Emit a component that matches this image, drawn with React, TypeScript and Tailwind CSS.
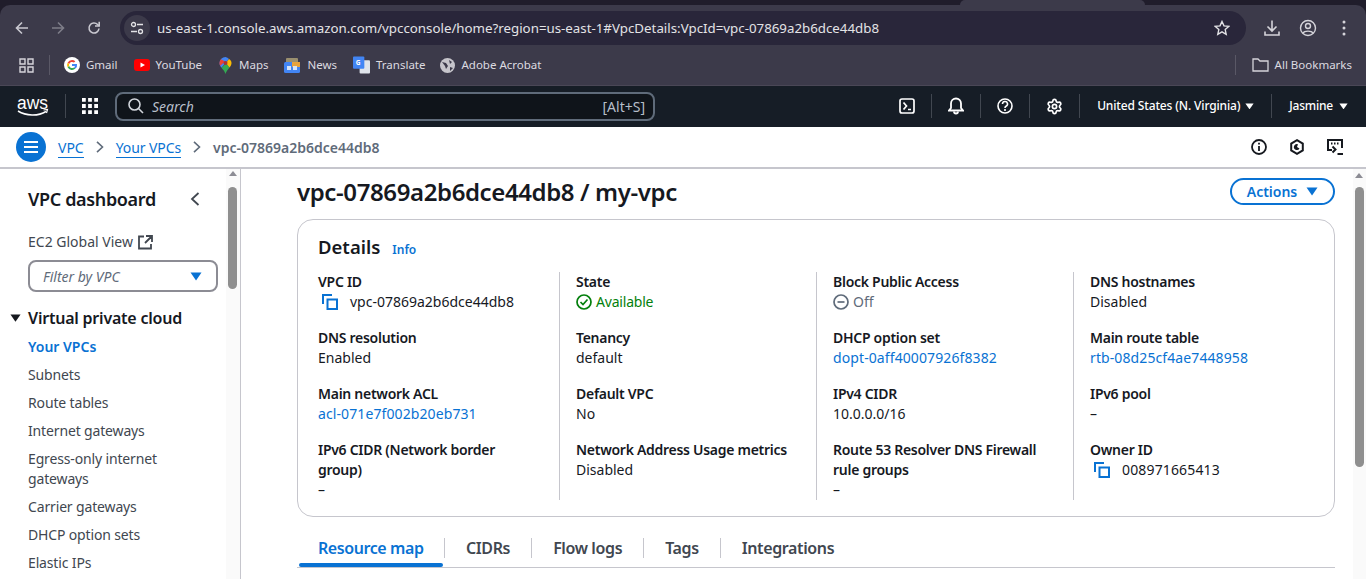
import React from "react";
import { Settings } from "lucide-react";

const F = "font-['Noto_Sans',sans-serif]";

function Back() {
  return (
    <svg width="16" height="16" viewBox="0 0 16 16" fill="none" stroke="currentColor" strokeWidth="1.6">
      <path d="M14 8H2.5M8 2.5 2.5 8 8 13.5" />
    </svg>
  );
}
function Forward() {
  return (
    <svg width="16" height="16" viewBox="0 0 16 16" fill="none" stroke="currentColor" strokeWidth="1.6">
      <path d="M2 8h11.5M8 2.5 13.5 8 8 13.5" />
    </svg>
  );
}
function Reload() {
  return (
    <svg width="16" height="16" viewBox="0 0 16 16" fill="none" stroke="currentColor" strokeWidth="1.6">
      <path d="M13 8.5a5 5 0 1 1-1.4-4L13 6" />
      <path d="M13.2 1.8V6H9" />
    </svg>
  );
}
function Copy() {
  return (
    <svg width="16" height="16" viewBox="0 0 16 16" fill="none" stroke="#0972d3" strokeWidth="2">
      <path d="M5.5 5.5h9.5v9.5H5.5z" />
      <path d="M1 10V1h9" />
    </svg>
  );
}
function Caret({ c = "#0972d3", w = 13 }: { c?: string; w?: number }) {
  return (
    <svg width={w} height={w * 0.75} viewBox="0 0 12 9">
      <path d="M0.5 0.5h11L6 8.5z" fill={c} />
    </svg>
  );
}
function Field({ label, children }: { label: React.ReactNode; children: React.ReactNode }) {
  return (
    <div className="flex flex-col">
      <div className="text-[14px] leading-[20px] font-semibold tracking-[-0.28px] text-[#16191f]">{label}</div>
      <div className="text-[14px] leading-[20px] text-[#16191f]">{children}</div>
    </div>
  );
}
function Lnk({ children }: { children: React.ReactNode }) {
  return <span className="tracking-[0.1px] text-[#0972d3]">{children}</span>;
}
function Bookmark({ icon, label, gap = "gap-[6px]" }: { icon: React.ReactNode; label: string; gap?: string }) {
  return (
    <div className={`flex items-center ${gap}`}>
      {icon}
      <span className="text-[11.5px] text-[#dcdbe0]">{label}</span>
    </div>
  );
}
function NavSep({ cls }: { cls: string }) {
  return <div className={`h-[24px] w-px bg-[#414750] ${cls}`} />;
}

const navItems = ["Subnets", "Route tables", "Internet gateways", "Egress-only internet gateways", "Carrier gateways", "DHCP option sets", "Elastic IPs"];

export default function App() {
  return (
    <div className={`${F} flex h-[579px] w-[1366px] flex-col overflow-hidden bg-white`}>
      <div className="shrink-0 bg-[#201d2b]">
        {/* tab strip remnant */}
        <div className="relative h-[5px]">
          <div className="absolute left-[960px] top-0 h-[5px] w-[185px] rounded-t-lg bg-[#3c3a4a]" />
        </div>
        {/* browser toolbar */}
        <div className="flex h-[46px] items-center rounded-t-[10px] bg-[#3c3a4a]">
          <div className="flex w-[120px] items-center pl-[14px] text-[#c9c8d0]">
            <Back />
            <span className="ml-[20px] text-[#7e7d88]"><Forward /></span>
            <span className="ml-[20px]"><Reload /></span>
          </div>
          <div className="flex h-[34px] w-[1126px] items-center rounded-full bg-[#29263a] pl-[4px] pr-[16px]">
            <div className="flex h-[26px] w-[26px] items-center justify-center rounded-full bg-[#3c3a4a]">
              <svg width="14" height="14" viewBox="0 0 14 14" fill="none" stroke="#e3e3e6" strokeWidth="1.3">
                <circle cx="3.5" cy="3.5" r="2" />
                <path d="M7 3.5h6M1 10.5h6" />
                <circle cx="10.5" cy="10.5" r="2" />
              </svg>
            </div>
            <span className="ml-[7px] flex-1 pt-[1px] text-[13.3px] text-[#e3e3e6]">us-east-1.console.aws.amazon.com/vpcconsole/home?region=us-east-1#VpcDetails:VpcId=vpc-07869a2b6dce44db8</span>
            <svg width="16" height="16" viewBox="0 0 16 16" fill="none" stroke="#e3e3e6" strokeWidth="1.4">
              <path d="M8 1.500l2 4.400 4.700.5-3.500 3.200 1 4.700L8 11.900l-4.200 2.400 1-4.700L1.300 6.400 6 5.900z" />
            </svg>
          </div>
          <div className="ml-[17px] flex items-center text-[#d5d4da]">
            <svg width="18" height="18" viewBox="0 0 18 18" fill="none" stroke="currentColor" strokeWidth="1.6">
              <path d="M9 1.500v10.500M4.500 7.500 9 12l4.500-4.500M2 12.500V16h14v-3.500" />
            </svg>
            <svg className="ml-[18px]" width="18" height="18" viewBox="0 0 18 18" fill="none" stroke="currentColor" strokeWidth="1.4">
              <circle cx="9" cy="9" r="7.5" />
              <circle cx="9" cy="7" r="2.5" />
              <path d="M4 14c1.500-2.500 8.500-2.500 10 0" />
            </svg>
            <svg className="ml-[25px]" width="4" height="16" viewBox="0 0 4 16" fill="currentColor">
              <circle cx="2" cy="2" r="1.5" />
              <circle cx="2" cy="8" r="1.5" />
              <circle cx="2" cy="14" r="1.5" />
            </svg>
          </div>
        </div>
      </div>
      {/* bookmarks */}
      <div className="flex h-[34px] shrink-0 items-center bg-[#3c3a4a] pb-[6px] pl-[19px] pr-[14px]">
        <svg width="15" height="15" viewBox="0 0 15 15" fill="none" stroke="#d5d4da" strokeWidth="1.4">
          <path d="M1 1h5v5H1zM9 1h5v5H9zM1 9h5v5H1zM9 9h5v5H9z" />
        </svg>
        <div className="ml-[15px] mr-[14px] h-[20px] w-px bg-[#5a5866]" />
        <div className="flex items-center gap-[16px]">
          <Bookmark
            label="Gmail"
            icon={
              <svg width="16" height="16" viewBox="0 0 16 16">
                <circle cx="8" cy="8" r="8" fill="#fff" />
                <path d="M8 3a5 5 0 0 1 3.300 1.200L10 5.600A3 3 0 0 0 5.200 7L3.600 5.700A5 5 0 0 1 8 3z" fill="#ea4335" />
                <path d="M3.600 5.700 5.200 7a3 3 0 0 0 0 2L3.600 10.300a5 5 0 0 1 0-4.600z" fill="#fbbc05" />
                <path d="M3.600 10.300 5.200 9A3 3 0 0 0 10 10.400l1.500 1.200A5 5 0 0 1 3.600 10.300z" fill="#34a853" />
                <path d="M8 7h5a5 5 0 0 1-1.500 4.600L10 10.400A2 2 0 0 0 11 9H8z" fill="#4285f4" />
              </svg>
            }
          />
          <Bookmark
            label="YouTube"
            icon={
              <svg width="16" height="12" viewBox="0 0 16 12">
                <rect width="16" height="12" rx="3" fill="#f00" />
                <path d="M6.500 3.500v5L11 6z" fill="#fff" />
              </svg>
            }
          />
          <Bookmark
            label="Maps"
            gap="ml-[1px] gap-[7px]"
            icon={
              <svg width="13" height="17" viewBox="0 0 13 17">
                <path d="M6.500 0A6 6 0 0 0 .5 6c0 2 1 3.500 2 4.800L10 2A6 6 0 0 0 6.500 0z" fill="#4285f4" />
                <path d="M2.500 10.800C4 12.600 5.800 14.500 6.500 17c.7-2.500 2.500-4.500 4-6.500L7 6z" fill="#34a853" />
                <path d="M10 2 7 6l3.500 4.500c1-1.200 2-2.600 2-4.500 0-1.600-1-3-2.500-4z" fill="#fbbc05" />
                <path d="M2 2.200A6 6 0 0 0 .5 6c0 1 .3 2 .8 2.800L6 4.500z" fill="#ea4335" />
                <circle cx="6.500" cy="6" r="2" fill="#a33" />
              </svg>
            }
          />
          <Bookmark
            label="News"
            gap="gap-[7px]"
            icon={
              <svg width="16" height="15" viewBox="0 0 16 15">
                <rect x="2" y="0" width="12" height="8" rx="1" fill="#9a8f6f" />
                <rect x="0" y="4" width="16" height="11" rx="1.500" fill="#4285f4" />
                <rect x="8" y="4" width="8" height="5" fill="#e8a33d" />
                <rect x="3" y="8" width="4" height="4" fill="#d5e3f7" />
                <rect x="9" y="8" width="4" height="4" fill="#d5e3f7" />
              </svg>
            }
          />
          <Bookmark
            label="Translate"
            icon={
              <svg width="17" height="18" viewBox="0 0 18 18">
                <rect x="7" y="4" width="11" height="14" rx="1" fill="#dfe3ea" />
                <rect x="0" y="0" width="12" height="13" rx="1" fill="#4285f4" />
                <text x="3" y="9" fontSize="7" fill="#fff" fontWeight="700">G</text>
              </svg>
            }
          />
          <Bookmark
            label="Adobe Acrobat"
            gap="-ml-[1px] gap-[6px]"
            icon={
              <svg width="15" height="15" viewBox="0 0 15 15">
                <circle cx="7.500" cy="7.500" r="7.500" fill="#c6c5cb" />
                <path d="M2 4l4 1 2 3-2 3-1-3zM9 2l3 2-2 2zM10 9l3 1-3 3z" fill="#3c3a4a" />
              </svg>
            }
          />
        </div>
        <div className="flex-1" />
        <div className="mr-[16px] h-[20px] w-px bg-[#5a5866]" />
        <Bookmark
          label="All Bookmarks"
          icon={
            <svg width="17" height="14" viewBox="0 0 17 14" fill="none" stroke="#d5d4da" strokeWidth="1.3">
              <path d="M1 1h5l2 2h8v10H1z" />
            </svg>
          }
        />
      </div>
      {/* aws nav */}
      <div className="flex h-[42px] shrink-0 items-center border-t border-[#4a4756] bg-[#161d26] pb-[1px] pl-[17px] text-white">
        <svg className="overflow-visible" width="32" height="24" viewBox="0 0 32 24">
          <text x="0" y="15" fontSize="18" fill="#fff" fontFamily="Liberation Sans" textLength="31" lengthAdjust="spacingAndGlyphs">aws</text>
          <path d="M1 17c8 5 20 5.500 28 .5" fill="none" stroke="#fff" strokeWidth="1.5" />
          <path d="M26.500 16l4-.5-1 3.500" fill="none" stroke="#fff" strokeWidth="1.2" />
        </svg>
        <NavSep cls="ml-[16px]" />
        <svg className="ml-[16px]" width="16" height="16" viewBox="0 0 17 17" fill="#fff">
          <path d="M0 0h4v4H0zM6.500 0h4v4h-4zM13 0h4v4h-4zM0 6.500h4v4H0zM6.500 6.500h4v4h-4zM13 6.500h4v4h-4zM0 13h4v4H0zM6.500 13h4v4h-4zM13 13h4v4h-4z" />
        </svg>
        <div className="ml-[17px] flex h-[29px] w-[540px] items-center rounded-[8px] border-2 border-[#5f6b7a] bg-[#0f141a] pl-[11px] pr-[8px]">
          <svg width="16" height="16" viewBox="0 0 16 16" fill="none" stroke="#d1d5db" strokeWidth="1.6">
            <circle cx="6.500" cy="6.500" r="5.500" />
            <path d="M10.500 10.500 15 15" />
          </svg>
          <span className="ml-[8px] flex-1 text-[14px] italic text-[#b6bec9]">Search</span>
          <span className="text-[14px] text-[#b6bec9]">[Alt+S]</span>
        </div>
        <div className="flex-1" />
        <svg width="16" height="16" viewBox="0 0 16 16" fill="none" stroke="#fff" strokeWidth="1.7">
          <rect x="1" y="1" width="14" height="14" rx="2" />
          <path d="M4.500 4.500 7.500 8l-3 3.500M9 11.500h3" />
        </svg>
        <NavSep cls="mx-[16px]" />
        <svg width="16" height="18" viewBox="0 0 16 18" fill="none" stroke="#fff" strokeWidth="1.8">
          <path d="M1 13.500h14l-2-2.500V6.500a5 5 0 0 0-10 0V11z" />
          <path d="M6 14.500a2 2 0 0 0 4 0" />
        </svg>
        <NavSep cls="mx-[16px]" />
        <svg width="16" height="16" viewBox="0 0 16 16" fill="none" stroke="#fff" strokeWidth="1.6">
          <circle cx="8" cy="8" r="7" />
          <path d="M5.500 6a2.500 2.500 0 1 1 3.500 2.300c-.7.4-1 .8-1 1.700M8 11v2" />
        </svg>
        <NavSep cls="mx-[16px]" />
        <Settings size={17} strokeWidth={2.4} color="#fff" />
        <NavSep cls="ml-[16px]" />
        <span className="ml-[17px] text-[12px] font-medium tracking-[-0.15px]">United States (N. Virginia)</span>
        <span className="ml-[5px]"><Caret c="#fff" w={9} /></span>
        <NavSep cls="ml-[17px]" />
        <span className="ml-[17px] text-[12px] font-medium tracking-[-0.22px]">Jasmine</span>
        <span className="ml-[6px] mr-[18px]"><Caret c="#fff" w={9} /></span>
      </div>
      {/* breadcrumbs */}
      <div className="flex h-[42px] shrink-0 items-center border-b-2 border-[#c6c6cd] bg-white pl-[16px] pr-[23px]">
        <div className="flex h-[30px] w-[30px] items-center justify-center rounded-full bg-[#0972d3]">
          <svg width="14" height="12" viewBox="0 0 14 12" stroke="#fff" strokeWidth="2">
            <path d="M0 1h14M0 6h14M0 11h14" />
          </svg>
        </div>
        <span className="ml-[12px] mt-[2px] border-b border-[#0972d3] text-[14px] leading-[18px] text-[#0972d3]">VPC</span>
        <svg className="mx-[12px]" width="8" height="12" viewBox="0 0 8 12" fill="none" stroke="#5f6b7a" strokeWidth="1.6">
          <path d="M1 .8 6.500 6 1 11.200" />
        </svg>
        <span className="mt-[2px] border-b border-[#0972d3] text-[14px] leading-[18px] tracking-[-0.1px] text-[#0972d3]">Your VPCs</span>
        <svg className="mx-[12px]" width="8" height="12" viewBox="0 0 8 12" fill="none" stroke="#5f6b7a" strokeWidth="1.6">
          <path d="M1 .8 6.500 6 1 11.200" />
        </svg>
        <span className="mt-[1px] text-[14px] font-semibold text-[#5f6b7a]">vpc-07869a2b6dce44db8</span>
        <div className="flex-1" />
        <div className="flex items-center gap-[22px]">
          <svg width="16" height="16" viewBox="0 0 16 16" fill="none" stroke="#16191f" strokeWidth="1.8">
            <circle cx="8" cy="8" r="7" />
            <path d="M8 7v5M8 3.800v1.800" />
          </svg>
          <svg width="16" height="16" viewBox="0 0 16 16" fill="none" stroke="#16191f" strokeWidth="2">
            <path d="M8 1.200l5.800 3.400v6.800L8 14.800l-5.800-3.400V4.600z" />
            <path d="M10.500 9.500A3 3 0 1 1 9 5.200L8 8z" fill="#16191f" stroke="none" />
          </svg>
          <svg width="16" height="16" viewBox="0 0 16 16" fill="none" stroke="#16191f" strokeWidth="2">
            <path d="M5 11H1V1h14v8" />
            <path d="M4 4.500h1.500M7 4.500h1.500M10 4.500h1.500" />
            <path d="M5.500 7.500l3 3-3 3M10.500 15H16" />
          </svg>
        </div>
      </div>
      {/* body */}
      <div className="flex min-h-0 flex-1">
        {/* side nav */}
        <div className="flex w-[241px] shrink-0 border-r border-[#c6c6cd]">
          <div className="w-[226px] shrink-0 pl-[28px]">
            <div className="mt-[18px] flex items-center justify-between pr-[26px]">
              <span className="text-[18px] font-semibold leading-[24px] tracking-[-0.35px] text-[#16191f]">VPC dashboard</span>
              <svg width="10" height="14" viewBox="0 0 10 14" fill="none" stroke="#414750" strokeWidth="1.8">
                <path d="M8.500 1 2 7l6.500 6" />
              </svg>
            </div>
            <div className="mt-[21px] flex items-center gap-[5px] text-[14px] leading-[20px] text-[#414750]">
              EC2 Global View
              <svg width="15" height="15" viewBox="0 0 15 15" fill="none" stroke="#414750" strokeWidth="1.8">
                <path d="M6 1.500H1v12h12V9M8 1h6v6M14 1 7 8" />
              </svg>
            </div>
            <div className="mt-[8px] flex h-[32px] w-[190px] items-center justify-between rounded-[8px] border-2 border-[#8c8c94] pl-[13px] pr-[14px]">
              <span className="text-[14px] italic text-[#5f6b7a]">Filter by VPC</span>
              <Caret w={12} />
            </div>
            <div className="-ml-[18px] mt-[15px] flex items-center gap-[7px]">
              <Caret c="#16191f" w={11} />
              <span className="text-[16px] font-semibold leading-[22px] tracking-[-0.22px] text-[#16191f]">Virtual private cloud</span>
            </div>
            <div className="mt-[8px] text-[14px] font-semibold leading-[20px] text-[#0972d3]">Your VPCs</div>
            <div className="mt-[8px] flex w-[170px] flex-col gap-[8px]">
              {navItems.map((n) => (
                <div key={n} className="text-[14px] leading-[20px] tracking-[-0.15px] text-[#414750]">{n}</div>
              ))}
            </div>
          </div>
          <div className="relative flex-1 bg-[#fafafa]">
            <div className="absolute left-0 right-0 top-[2px] mx-auto h-0 w-0 border-x-[4px] border-b-[5px] border-x-transparent border-b-[#8c8c94]" />
            <div className="absolute left-[2px] top-[18px] h-[102px] w-[9px] rounded-full bg-[#8f8f8f]" />
          </div>
        </div>
        {/* main */}
        <div className="min-w-0 flex-1 pl-[56px] pr-[18px]">
          <div className="flex items-start justify-between pt-[8px]">
            <h1 className="text-[24px] font-semibold leading-[30px] tracking-[-0.39px] text-[#16191f]">vpc-07869a2b6dce44db8 / my-vpc</h1>
            <div className="mt-[1px] flex h-[27px] w-[105px] items-center justify-center gap-[9px] rounded-full border-2 border-[#0972d3] text-[14px] font-semibold text-[#0972d3]">
              Actions <Caret w={12} />
            </div>
          </div>
          <div className="mt-[12px] h-[298px] w-[1038px] rounded-[16px] border border-[#c6c6cd] px-[20px] pt-[14px]">
            <div className="flex items-baseline gap-[12px]">
              <span className="text-[18.5px] font-semibold leading-[26px] text-[#16191f]">Details</span>
              <span className="text-[12px] font-semibold text-[#0972d3]">Info</span>
            </div>
            <div className="mt-[12px] grid grid-cols-[242px_257px_257px_1fr]">
              <div className="flex flex-col gap-[16px] border-r border-[#c6c6cd]">
                <Field label="VPC ID">
                  <span className="flex items-center gap-[12px] pl-[4px]"><Copy /><span>vpc-07869a2b6dce44db8</span></span>
                </Field>
                <Field label="DNS resolution">Enabled</Field>
                <Field label="Main network ACL"><Lnk>acl-071e7f002b20eb731</Lnk></Field>
                <div className="w-[215px]"><Field label="IPv6 CIDR (Network border group)">–</Field></div>
              </div>
              <div className="flex flex-col gap-[16px] border-r border-[#c6c6cd] pl-[16px]">
                <Field label="State">
                  <span className="flex items-center gap-[4px] tracking-[-0.2px] text-[#037f0c]">
                    <svg width="16" height="16" viewBox="0 0 16 16" fill="none" stroke="#037f0c" strokeWidth="1.7">
                      <circle cx="8" cy="8" r="7" />
                      <path d="M4.500 8l2.500 2.500L11.500 5.500" />
                    </svg>
                    Available
                  </span>
                </Field>
                <Field label="Tenancy">default</Field>
                <Field label="Default VPC">No</Field>
                <Field label="Network Address Usage metrics">Disabled</Field>
              </div>
              <div className="flex flex-col gap-[16px] border-r border-[#c6c6cd] pl-[16px]">
                <Field label="Block Public Access">
                  <span className="flex items-center gap-[4px] text-[#5f6b7a]">
                    <svg width="16" height="16" viewBox="0 0 16 16" fill="none" stroke="#5f6b7a" strokeWidth="1.7">
                      <circle cx="8" cy="8" r="7" />
                      <path d="M4.500 8h7" />
                    </svg>
                    Off
                  </span>
                </Field>
                <Field label="DHCP option set"><Lnk>dopt-0aff40007926f8382</Lnk></Field>
                <Field label="IPv4 CIDR">10.0.0.0/16</Field>
                <div className="w-[225px]"><Field label="Route 53 Resolver DNS Firewall rule groups">–</Field></div>
              </div>
              <div className="flex flex-col gap-[16px] pl-[16px]">
                <Field label="DNS hostnames">Disabled</Field>
                <Field label="Main route table"><Lnk>rtb-08d25cf4ae7448958</Lnk></Field>
                <Field label="IPv6 pool">–</Field>
                <Field label="Owner ID">
                  <span className="flex items-center gap-[12px] pl-[4px]"><Copy /><span className="tracking-[0.15px]">008971665413</span></span>
                </Field>
              </div>
            </div>
          </div>
          <div className="mt-[21px] flex h-[30px] w-[1038px] border-b border-[#c6c6cd] pl-[2px]">
            <div className="relative h-[29px] w-[145px] pl-[19px] text-[16px] font-semibold leading-[20px] tracking-[-0.42px] text-[#0972d3]">
              Resource map
              <div className="absolute bottom-0 left-0 h-[4px] w-[144px] rounded-full bg-[#0972d3]" />
            </div>
            {["CIDRs", "Flow logs", "Tags", "Integrations"].map((t) => (
              <div key={t} className="h-[20px] border-l border-[#c6c6cd] px-[21px] text-[16px] font-semibold leading-[20px] tracking-[-0.38px] text-[#414750]">{t}</div>
            ))}
          </div>
        </div>
        {/* page scrollbar */}
        <div className="relative w-[13px] shrink-0 bg-[#fafafa]">
          <div className="absolute left-[2px] top-[4px] h-0 w-0 border-x-[4px] border-b-[5px] border-x-transparent border-b-[#8c8c94]" />
          <div className="absolute left-[2px] top-[18px] h-[280px] w-[9px] rounded-full bg-[#8f8f8f]" />
        </div>
      </div>
    </div>
  );
}
